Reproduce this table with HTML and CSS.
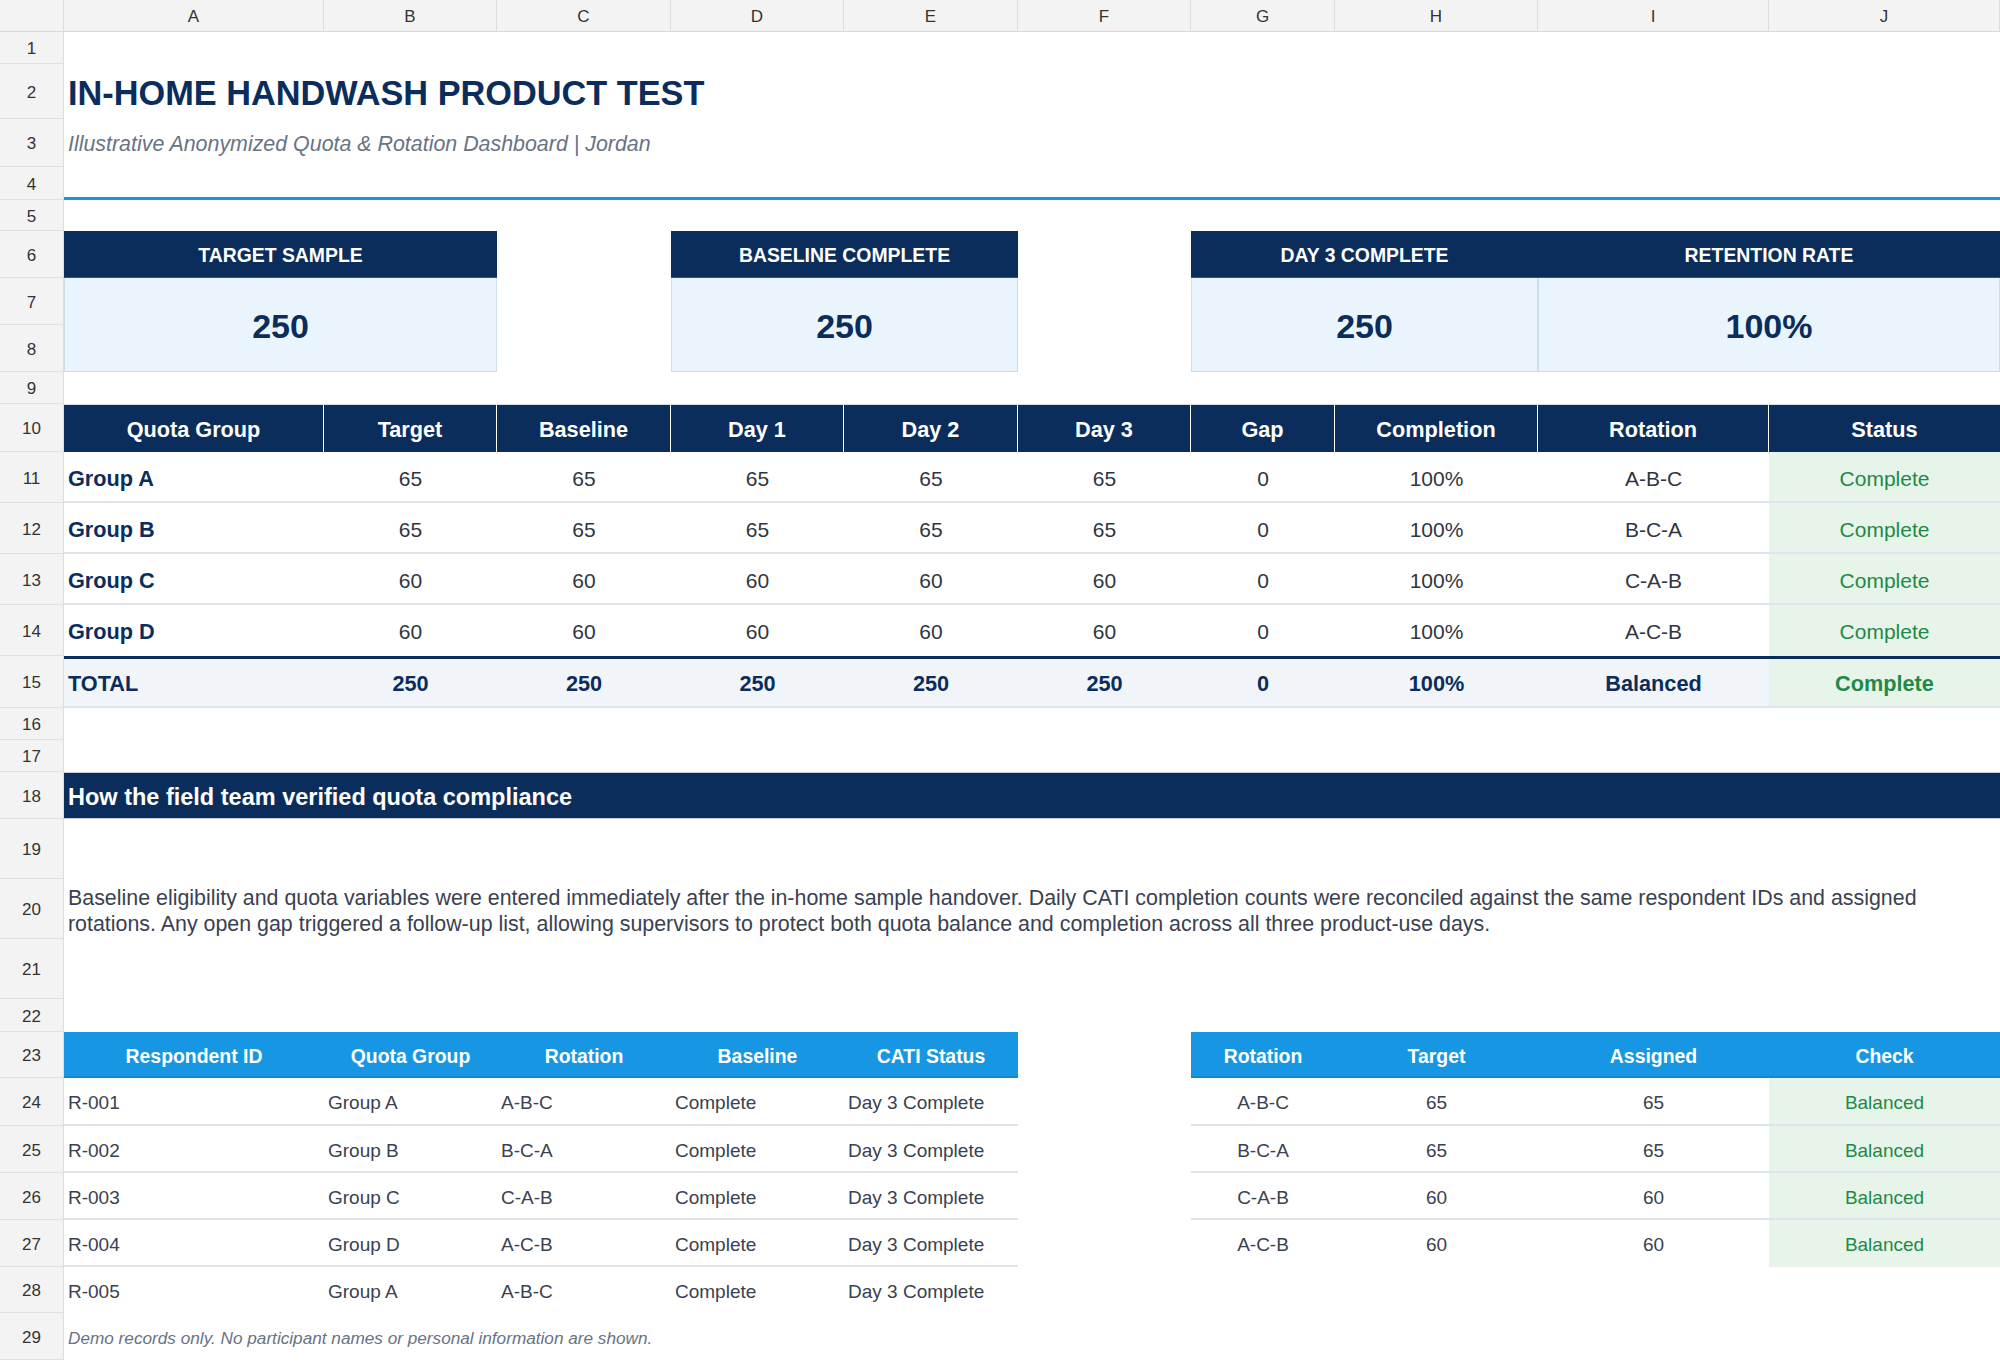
FILE: index.html
```html
<!DOCTYPE html>
<html lang="en">
<head>
<meta charset="utf-8">
<title>In-Home Handwash Product Test</title>
<link rel="stylesheet" href="styles.css">
</head>
<body>
<div class="sheet">
  <div class="row colhead">
    <div class="corner"></div>
    <div class="ch">A</div><div class="ch">B</div><div class="ch">C</div><div class="ch">D</div><div class="ch">E</div>
    <div class="ch">F</div><div class="ch">G</div><div class="ch">H</div><div class="ch">I</div><div class="ch">J</div>
  </div>

  <div class="row h32"><div class="rh">1</div><div class="all"></div></div>
  <div class="row h55"><div class="rh">2</div><div class="cell all title">IN-HOME HANDWASH PRODUCT TEST</div></div>
  <div class="row h48"><div class="rh">3</div><div class="cell all subtitle">Illustrative Anonymized Quota &amp; Rotation Dashboard | Jordan</div></div>
  <div class="row h33"><div class="rh">4</div><div class="all rule"></div></div>
  <div class="row h31"><div class="rh">5</div><div class="all"></div></div>

  <div class="row h47">
    <div class="rh">6</div>
    <div class="cell kpi-head s2">TARGET SAMPLE</div><div></div>
    <div class="cell kpi-head s2">BASELINE COMPLETE</div><div></div>
    <div class="cell kpi-head s2">DAY 3 COMPLETE</div>
    <div class="cell kpi-head s2">RETENTION RATE</div>
  </div>
  <div class="row band">
    <div class="rh">7</div>
    <div class="cell kpi-val s2 r2">250</div>
    <div class="r2"></div>
    <div class="cell kpi-val s2 r2">250</div>
    <div class="r2"></div>
    <div class="cell kpi-val s2 r2">250</div>
    <div class="cell kpi-val s2 r2">100%</div>
    <div class="rh">8</div>
  </div>
  <div class="row h32"><div class="rh">9</div><div class="all"></div></div>

  <div class="row h48">
    <div class="rh">10</div>
    <div class="cell th">Quota Group</div><div class="cell th">Target</div><div class="cell th">Baseline</div>
    <div class="cell th">Day 1</div><div class="cell th">Day 2</div><div class="cell th">Day 3</div>
    <div class="cell th">Gap</div><div class="cell th">Completion</div><div class="cell th">Rotation</div>
    <div class="cell th last">Status</div>
  </div>
  <div class="row h51">
    <div class="rh">11</div>
    <div class="cell td grp">Group A</div><div class="cell td c">65</div><div class="cell td c">65</div><div class="cell td c">65</div>
    <div class="cell td c">65</div><div class="cell td c">65</div><div class="cell td c">0</div><div class="cell td c">100%</div>
    <div class="cell td c">A-B-C</div><div class="cell td c ok">Complete</div>
  </div>
  <div class="row h51">
    <div class="rh">12</div>
    <div class="cell td grp">Group B</div><div class="cell td c">65</div><div class="cell td c">65</div><div class="cell td c">65</div>
    <div class="cell td c">65</div><div class="cell td c">65</div><div class="cell td c">0</div><div class="cell td c">100%</div>
    <div class="cell td c">B-C-A</div><div class="cell td c ok">Complete</div>
  </div>
  <div class="row h51">
    <div class="rh">13</div>
    <div class="cell td grp">Group C</div><div class="cell td c">60</div><div class="cell td c">60</div><div class="cell td c">60</div>
    <div class="cell td c">60</div><div class="cell td c">60</div><div class="cell td c">0</div><div class="cell td c">100%</div>
    <div class="cell td c">C-A-B</div><div class="cell td c ok">Complete</div>
  </div>
  <div class="row h51">
    <div class="rh">14</div>
    <div class="cell td last-body grp">Group D</div><div class="cell td last-body c">60</div><div class="cell td last-body c">60</div><div class="cell td last-body c">60</div>
    <div class="cell td last-body c">60</div><div class="cell td last-body c">60</div><div class="cell td last-body c">0</div><div class="cell td last-body c">100%</div>
    <div class="cell td last-body c">A-C-B</div><div class="cell td last-body c ok">Complete</div>
  </div>
  <div class="row h52">
    <div class="rh">15</div>
    <div class="cell tt">TOTAL</div><div class="cell tt c">250</div><div class="cell tt c">250</div><div class="cell tt c">250</div>
    <div class="cell tt c">250</div><div class="cell tt c">250</div><div class="cell tt c">0</div><div class="cell tt c">100%</div>
    <div class="cell tt c">Balanced</div><div class="cell tt c ok">Complete</div>
  </div>
  <div class="row h32"><div class="rh">16</div><div class="all"></div></div>
  <div class="row h32"><div class="rh">17</div><div class="all"></div></div>
  <div class="row h47"><div class="rh">18</div><div class="cell all section">How the field team verified quota compliance</div></div>
  <div class="row h60"><div class="rh">19</div><div class="all"></div></div>
  <div class="row h60"><div class="rh">20</div><div class="cell all para">Baseline eligibility and quota variables were entered immediately after the in-home sample handover. Daily CATI completion counts were reconciled against the same respondent IDs and assigned<br>rotations. Any open gap triggered a follow-up list, allowing supervisors to protect both quota balance and completion across all three product-use days.</div></div>
  <div class="row h60"><div class="rh">21</div><div class="all"></div></div>
  <div class="row h33"><div class="rh">22</div><div class="all"></div></div>

  <div class="row h46">
    <div class="rh">23</div>
    <div class="cell bh">Respondent ID</div><div class="cell bh">Quota Group</div><div class="cell bh">Rotation</div>
    <div class="cell bh">Baseline</div><div class="cell bh">CATI Status</div>
    <div></div>
    <div class="cell bh">Rotation</div><div class="cell bh">Target</div><div class="cell bh">Assigned</div><div class="cell bh">Check</div>
  </div>
  <div class="row h48">
    <div class="rh">24</div>
    <div class="cell rd">R-001</div><div class="cell rd">Group A</div><div class="cell rd">A-B-C</div><div class="cell rd">Complete</div><div class="cell rd">Day 3 Complete</div>
    <div></div>
    <div class="cell rd c">A-B-C</div><div class="cell rd c">65</div><div class="cell rd c">65</div><div class="cell rd c ok">Balanced</div>
  </div>
  <div class="row h47">
    <div class="rh">25</div>
    <div class="cell rd">R-002</div><div class="cell rd">Group B</div><div class="cell rd">B-C-A</div><div class="cell rd">Complete</div><div class="cell rd">Day 3 Complete</div>
    <div></div>
    <div class="cell rd c">B-C-A</div><div class="cell rd c">65</div><div class="cell rd c">65</div><div class="cell rd c ok">Balanced</div>
  </div>
  <div class="row h47">
    <div class="rh">26</div>
    <div class="cell rd">R-003</div><div class="cell rd">Group C</div><div class="cell rd">C-A-B</div><div class="cell rd">Complete</div><div class="cell rd">Day 3 Complete</div>
    <div></div>
    <div class="cell rd c">C-A-B</div><div class="cell rd c">60</div><div class="cell rd c">60</div><div class="cell rd c ok">Balanced</div>
  </div>
  <div class="row h47">
    <div class="rh">27</div>
    <div class="cell rd">R-004</div><div class="cell rd">Group D</div><div class="cell rd">A-C-B</div><div class="cell rd">Complete</div><div class="cell rd">Day 3 Complete</div>
    <div></div>
    <div class="cell rd nb c">A-C-B</div><div class="cell rd nb c">60</div><div class="cell rd nb c">60</div><div class="cell rd nb c ok">Balanced</div>
  </div>
  <div class="row h46">
    <div class="rh">28</div>
    <div class="cell rd nb">R-005</div><div class="cell rd nb">Group A</div><div class="cell rd nb">A-B-C</div><div class="cell rd nb">Complete</div><div class="cell rd nb">Day 3 Complete</div>
  </div>
  <div class="row h47"><div class="rh">29</div><div class="cell all note">Demo records only. No participant names or personal information are shown.</div></div>
</div>
</body>
</html>
```

FILE: styles.css
```css
* { box-sizing: border-box; margin: 0; padding: 0; }

html, body {
  margin: 0;
  background: #ffffff;
  font-family: "Liberation Sans", Arial, Helvetica, sans-serif;
  color: #2f3642;
}

body {
  width: 2000px;
  height: 1361px;
  overflow: hidden;
}

.sheet { width: 2000px; }

.row {
  display: grid;
  grid-template-columns: 64px 260px 173px 174px 173px 174px 173px 144px 203px 231px 231px;
}

.colhead { height: 32px; background: #f3f3f3; }
.corner, .ch {
  border-right: 1px solid #dddddd;
  border-bottom: 1px solid #d9d9d9;
}
.ch {
  display: flex;
  align-items: center;
  justify-content: center;
  padding-top: 2px;
  font-size: 17px;
  color: #333333;
}

.rh {
  background: #f3f3f3;
  border-right: 1px solid #dddddd;
  border-bottom: 1px solid #e0e0e0;
  display: flex;
  align-items: center;
  justify-content: center;
  padding-top: 3px;
  font-size: 17px;
  color: #333333;
}

.all { grid-column: 2 / -1; }
.s2 { grid-column: span 2; }
.r2 { grid-row: span 2; }

.h31 { height: 31px; }
.h32 { height: 32px; }
.h33 { height: 33px; }
.h46 { height: 46px; }
.h47 { height: 47px; }
.h48 { height: 48px; }
.h51 { height: 51px; }
.h52 { height: 52px; }
.h55 { height: 55px; }
.h60 { height: 60px; }
.band { grid-template-rows: 47px 47px; }

.cell {
  display: flex;
  align-items: center;
  padding: 3px 4px 0;
  white-space: nowrap;
}
.c { justify-content: center; }

.title {
  font-size: 34.3px;
  font-weight: 700;
  color: #0b2d5b;
}
.subtitle {
  font-size: 21.4px;
  font-style: italic;
  color: #687386;
}
.rule { border-bottom: 3px solid #1a96e0; }

.kpi-head {
  justify-content: center;
  background: #0b2d5b;
  color: #ffffff;
  font-weight: 700;
  font-size: 19.4px;
  border-bottom: 1px solid #34557e;
}
.kpi-val {
  justify-content: center;
  background: #eaf4fc;
  border: 1px solid #cfdcea;
  border-top: 0;
  color: #0b2d5b;
  font-weight: 700;
  font-size: 34px;
}

.th {
  justify-content: center;
  background: #0b2d5b;
  color: #ffffff;
  font-weight: 700;
  font-size: 21.7px;
  border-right: 1px solid #ffffff;
  border-top: 1px solid #d8dee6;
}
.th.last { border-right: 0; }

.td {
  font-size: 21px;
  color: #2f3642;
  border-bottom: 2px solid #dfe5ec;
  padding-top: 4px;
}
.td.last-body { border-bottom: 0; padding-top: 3px; }
.grp { font-weight: 700; color: #0b2d5b; font-size: 21.7px; }

.ok {
  background: #e7f4ea;
  color: #1e8a46;
}

.tt {
  font-size: 21.7px;
  font-weight: 700;
  color: #0b2d5b;
  background: #f1f5f9;
  border-top: 3px solid #0b2d5b;
  border-bottom: 2px solid #dde3ea;
  padding-top: 3px;
}
.tt.ok { background: #e7f4ea; color: #1e8a46; }

.section {
  background: #0b2d5b;
  color: #ffffff;
  font-weight: 700;
  font-size: 23.5px;
  border-top: 1px solid #c9d2dc;
  border-bottom: 1px solid #c9d2dc;
}

.para {
  font-size: 21.4px;
  line-height: 26px;
  color: #3a4150;
  white-space: normal;
}

.bh {
  justify-content: center;
  background: #1797e3;
  color: #ffffff;
  font-weight: 700;
  font-size: 19.4px;
  border-bottom: 2px solid #1487d2;
  padding-top: 4px;
}

.rd {
  font-size: 19px;
  color: #3a4150;
  border-bottom: 2px solid #dfe4ec;
  padding-top: 4px;
}
.rd.ok { color: #1e8a46; }
.rd.nb { border-bottom: 0; padding-top: 3px; }

.note {
  font-size: 17.2px;
  font-style: italic;
  color: #687386;
}
```
